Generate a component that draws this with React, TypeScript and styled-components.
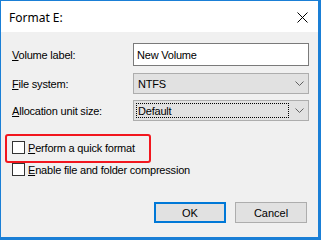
import styled, { createGlobalStyle } from 'styled-components';

const GlobalStyle = createGlobalStyle`
  html, body {
    margin: 0;
    padding: 0;
    background: #ffffff;
  }
  * {
    box-sizing: border-box;
  }
`;

const Window = styled.div`
  width: 321px;
  height: 240px;
  display: flex;
  flex-direction: column;
  border-top: 1px solid #1a7fd6;
  border-left: 1px solid #1a7fd6;
  border-right: 3px solid #1a7fd6;
  border-bottom: 3px solid #1a7fd6;
  background: #f0f0f0;
  font-family: "Liberation Sans", Arial, sans-serif;
  font-size: 11px;
  letter-spacing: -0.2px;
  color: #000000;
  overflow: hidden;
`;

const TitleBar = styled.div`
  height: 31px;
  flex: none;
  display: flex;
  align-items: center;
  justify-content: space-between;
  background: #ffffff;
  padding: 0 9px 0 8px;
`;

const Title = styled.span`
  font-family: "Noto Sans", "Open Sans", sans-serif;
  font-size: 12px;
  letter-spacing: 0;
  color: #000000;
  margin-top: 1px;
`;

const CloseButton = styled.span`
  display: flex;
  width: 14px;
  height: 14px;
  align-items: center;
  justify-content: center;
  margin-top: 2px;
`;

const Body = styled.div`
  flex: 1;
  display: flex;
  flex-direction: column;
  padding: 11px 9px 0 11px;
`;

const FormRow = styled.div<{ $h: number; $gap: number }>`
  display: grid;
  grid-template-columns: 121px 176px;
  align-items: center;
  height: ${(p) => p.$h}px;
  margin-bottom: ${(p) => p.$gap}px;
`;

const Label = styled.span`
  white-space: nowrap;
`;

const TextInput = styled.div`
  height: 100%;
  border: 1px solid #7a7a7a;
  background: #ffffff;
  display: flex;
  align-items: center;
  padding-left: 3px;
`;

const Select = styled.div`
  height: 100%;
  border: 1px solid #adadad;
  background: #e1e1e1;
  display: flex;
  align-items: center;
  justify-content: space-between;
  padding: 2px 4px 2px 2px;
`;

const SelectValue = styled.span<{ $focus?: boolean }>`
  flex: 0 0 153px;
  height: 100%;
  display: flex;
  align-items: center;
  padding-left: 1px;
  border: 1px dotted ${(p) => (p.$focus ? '#000000' : 'transparent')};
`;

const Checks = styled.div`
  display: flex;
  flex-direction: column;
  gap: 9px;
  margin-top: 20px;
`;

const CheckRow = styled.div<{ $marked?: boolean }>`
  position: relative;
  display: flex;
  align-items: center;
  gap: 3px;
  height: 13px;
  ${(p) =>
    p.$marked &&
    `
    &::before {
      content: '';
      position: absolute;
      left: -7px;
      top: -7px;
      width: 142px;
      height: 25px;
      border: 2px solid #f2161e;
      border-radius: 3px;
    }
  `}
`;

const Box = styled.span`
  width: 13px;
  height: 13px;
  border: 1px solid #333333;
  background: #ffffff;
  flex: none;
`;

const Buttons = styled.div`
  display: flex;
  justify-content: flex-end;
  gap: 9px;
  margin-top: 26px;
  padding-right: 2px;
`;

const Button = styled.div<{ $primary?: boolean }>`
  width: 72px;
  height: 21px;
  display: flex;
  align-items: center;
  justify-content: center;
  background: #e1e1e1;
  letter-spacing: 0;
  border: ${(p) => (p.$primary ? '2px solid #0078d7' : '1px solid #adadad')};
`;

function Chevron() {
  return (
    <svg width="9" height="5" viewBox="0 0 9 5">
      <path d="M0.5 0.5 L4.5 4.5 L8.5 0.5" fill="none" stroke="#606060" strokeWidth="1" />
    </svg>
  );
}

export default function App() {
  return (
    <>
      <GlobalStyle />
      <Window>
        <TitleBar>
          <Title>Format E:</Title>
          <CloseButton>
            <svg width="11" height="11" viewBox="0 0 11 11">
              <path d="M0.5 0.5 L10.5 10.5 M10.5 0.5 L0.5 10.5" stroke="#000000" strokeWidth="1" />
            </svg>
          </CloseButton>
        </TitleBar>
        <Body>
          <FormRow $h={23} $gap={7}>
            <Label><u>V</u>olume label:</Label>
            <TextInput>New Volume</TextInput>
          </FormRow>
          <FormRow $h={21} $gap={6}>
            <Label><u>F</u>ile system:</Label>
            <Select>
              <SelectValue>NTFS</SelectValue>
              <Chevron />
            </Select>
          </FormRow>
          <FormRow $h={21} $gap={0}>
            <Label><u>A</u>llocation unit size:</Label>
            <Select>
              <SelectValue $focus>Default</SelectValue>
              <Chevron />
            </Select>
          </FormRow>
          <Checks>
            <CheckRow $marked>
              <Box />
              <span><u>P</u>erform a quick format</span>
            </CheckRow>
            <CheckRow>
              <Box />
              <span><u>E</u>nable file and folder compression</span>
            </CheckRow>
          </Checks>
          <Buttons>
            <Button $primary>OK</Button>
            <Button>Cancel</Button>
          </Buttons>
        </Body>
      </Window>
    </>
  );
}
